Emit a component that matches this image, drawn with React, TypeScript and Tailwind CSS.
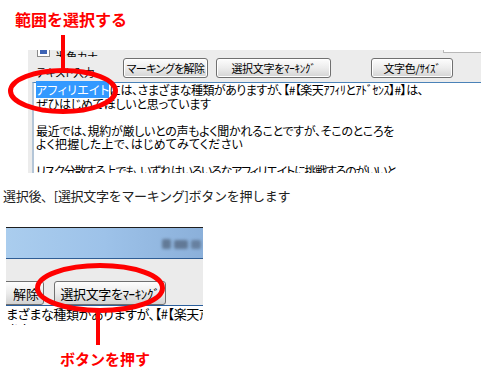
import React from "react";

const jp = "font-['Noto_Sans_CJK_JP','Noto_Sans_CJK_SC',sans-serif]";

// 半角カナは palt を切って素の幅で出す
function Han({ children }: { children: React.ReactNode }) {
  return <span className="[font-feature-settings:normal]">{children}</span>;
}

function Btn({ children, className = "" }: { children: React.ReactNode; className?: string }) {
  return (
    <div
      className={`flex h-[20px] shrink-0 items-center justify-center rounded-[3px] border border-[#707070] bg-linear-to-b from-[#fdfdfd] via-[#ececec] to-[#d4d4d4] text-[11px] leading-none text-black shadow-[inset_0_0_0_1px_#ffffff] ${className}`}
    >
      {children}
    </div>
  );
}

function EditorShot() {
  return (
    <div className="ml-[28px] h-[123px] overflow-hidden bg-[#ececec] [font-feature-settings:'palt']">
      {/* 半分切れたチェックボックス行 */}
      <div className="flex h-[7px] overflow-hidden">
        <div className="flex flex-1 items-end gap-[5px] pl-[9px]">
          <div className="h-[13px] w-[13px] shrink-0 border border-[#8a8a8a] bg-white p-[2px]">
            <div className="h-full w-full bg-[#3d63b4]" />
          </div>
          <span className="-mb-[6px] text-[11px] leading-[13px] text-black">半角カナ</span>
        </div>
        <div className="h-[3px] w-[38px] border-b border-l border-[#b8b8b8] bg-white" />
      </div>

      <div className="mt-[1px] flex h-[20px] items-end">
        <span className="w-[95px] shrink-0 pl-[8px] text-[11px] leading-[12px] tracking-[-0.3px] text-black">
          テキスト入力
        </span>
        <Btn className="w-[85px] tracking-[-0.6px]">マーキングを解除</Btn>
        <Btn className="ml-[8px] w-[115px] tracking-[-0.3px]">
          選択文字を<Han>ﾏｰｷﾝｸﾞ</Han>
        </Btn>
        <Btn className="ml-[40px] w-[82px] tracking-[-0.3px]">
          文字色/<Han>ｻｲｽﾞ</Han>
        </Btn>
      </div>

      <div className="ml-[4px] mt-[4px] h-[100px] border-l-2 border-t border-l-[#b4c6d8] border-t-[#4a82b8] bg-white pl-[2px] text-[12px] leading-[13.5px] text-black">
        <div className="whitespace-nowrap tracking-[-0.5px]">
          <span className="bg-[#3399ff] tracking-[0.3px] text-white">アフィリエイト</span>
          には、さまざまな種類がありますが、【#【楽天<Han>ｱﾌｨﾘ</Han>と<Han>ｱﾄﾞｾﾝｽ</Han>】#】は、
        </div>
        <div className="whitespace-nowrap tracking-[-0.2px]">ぜひはじめてほしいと思っています</div>
        <div className="h-[13.5px]" />
        <div className="whitespace-nowrap tracking-[-0.3px]">
          最近では、規約が厳しいとの声もよく聞かれることですが、そこのところを
        </div>
        <div className="whitespace-nowrap tracking-[0.2px]">よく把握した上で、はじめてみてください</div>
        <div className="h-[13.5px]" />
        <div className="whitespace-nowrap tracking-[-1.2px]">
          リスク分散する上でも、いずれはいろいろなアフィリエイトに挑戦するのがいいと
        </div>
      </div>
    </div>
  );
}

function ZoomShot() {
  return (
    <div className="ml-[6px] h-[98px] w-[197px] overflow-hidden border-t border-[#1e1e1e] [font-feature-settings:'palt']">
      <div className="flex h-[31px] items-center justify-end gap-[3px] border-b border-[#2f5d94] bg-linear-to-r from-[#aacdee] via-[#9dc2e9] to-[#8bb0da] pr-[2px] pt-[2px]">
        <div className="h-[10px] w-[9px] rounded-[2px] bg-[#4f6179] opacity-70 blur-[1.5px]" />
        <div className="h-[9px] w-[14px] rounded-[2px] bg-[#4f6179] opacity-70 blur-[1.5px]" />
        <div className="h-[9px] w-[10px] rounded-[2px] bg-[#4f6179] opacity-60 blur-[1.5px]" />
      </div>
      <div className="flex h-[46px] items-end overflow-hidden bg-[#ebebeb]">
        <div className="-ml-[8px] flex h-[24px] w-[46px] shrink-0 items-center justify-end rounded-[3px] border border-[#707070] bg-linear-to-b from-[#fdfdfd] via-[#ececec] to-[#d2d2d2] pr-[4px] text-[13px] leading-none text-black">
          解除
        </div>
        <div className="ml-[10px] flex h-[24px] w-[112px] shrink-0 items-center justify-center rounded-[3px] border border-[#707070] bg-linear-to-b from-[#fdfdfd] via-[#ececec] to-[#d2d2d2] text-[13px] leading-none tracking-[-0.4px] text-black">
          選択文字を<Han>ﾏｰｷﾝｸﾞ</Han>
        </div>
      </div>
      <div className="border-t border-[#2a5e9c] bg-white text-[13px] leading-[15px] text-black">
        <div className="whitespace-nowrap tracking-[-0.4px]">
          まざまな種類がありますが、【#【楽天<Han>ｱﾌｨﾘ</Han>と<Han>ｱﾄﾞｾﾝｽ</Han>】#】は、
        </div>
        <div className="whitespace-nowrap tracking-[-0.4px]">ます</div>
      </div>
    </div>
  );
}

export default function App() {
  return (
    <div className={`relative h-[373px] w-[481px] overflow-hidden bg-white ${jp}`}>
      <div className="h-[50px] pl-[15px] pt-[9px] text-[16px] font-bold leading-[20px] text-[#ff0000]">
        範囲を選択する
      </div>

      <EditorShot />

      <p className="ml-[3px] mt-[15px] whitespace-nowrap text-[13px] leading-[16px] tracking-[-0.3px] text-[#222]">
        選択後、[選択文字をマーキング]ボタンを押します
      </p>

      <div className="mt-[23px]">
        <ZoomShot />
      </div>

      <div className="mt-[24px] pl-[60px] text-[15px] font-bold leading-[20px] text-[#ff0000]">
        ボタンを押す
      </div>

      {/* 赤い注釈（丸と線） */}
      <svg className="pointer-events-none absolute inset-0" width="481" height="373" viewBox="0 0 481 373">
        <line x1="63" y1="35" x2="63" y2="70" stroke="#ff0000" strokeWidth="4" />
        <ellipse cx="63" cy="91" rx="52.5" ry="20.5" fill="none" stroke="#ff0000" strokeWidth="5" />
        <line x1="98" y1="310" x2="98" y2="345" stroke="#ff0000" strokeWidth="4" />
        <ellipse cx="100" cy="288" rx="62.5" ry="22.5" fill="none" stroke="#ff0000" strokeWidth="5" />
      </svg>
    </div>
  );
}
